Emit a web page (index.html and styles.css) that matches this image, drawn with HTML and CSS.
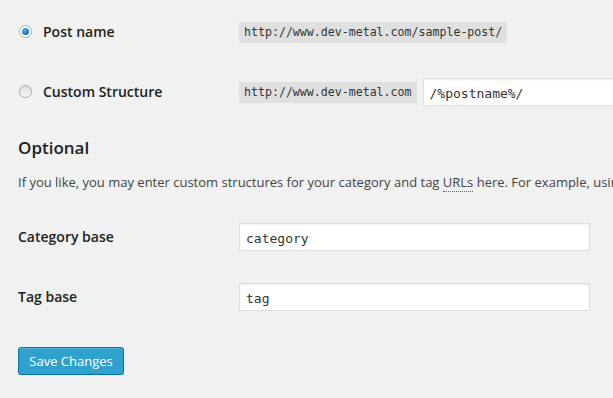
FILE: index.html
```html
<!DOCTYPE html>
<html lang="en">
<head>
  <meta charset="UTF-8">
  <title>Permalink Settings</title>
  <link rel="stylesheet" href="styles.css">
</head>
<body>
  <div class="wrap">
    <div class="form-row">
      <label class="choice">
        <span class="radio checked"></span>
        Post name
      </label>
      <div class="field">
        <code>http://www.dev-metal.com/sample-post/</code>
      </div>
    </div>
    <div class="form-row">
      <label class="choice">
        <span class="radio"></span>
        Custom Structure
      </label>
      <div class="field">
        <code>http://www.dev-metal.com</code>
        <input type="text" class="text-input wide" value="/%postname%/">
      </div>
    </div>

    <h3>Optional</h3>
    <p class="intro">If you like, you may enter custom structures for your category and tag <abbr title="Universal Resource Locator">URLs</abbr> here. For example, using <code>topics</code> as your category base would make your category links like <code>http://www.dev-metal.com/topics/uncategorized/</code>. If you leave these blank the defaults will be used.</p>

    <div class="form-row">
      <label class="label">Category base</label>
      <div class="field">
        <input type="text" class="text-input" value="category">
      </div>
    </div>
    <div class="form-row">
      <label class="label">Tag base</label>
      <div class="field">
        <input type="text" class="text-input" value="tag">
      </div>
    </div>

    <div class="submit">
      <button class="button-primary">Save Changes</button>
    </div>
  </div>
</body>
</html>
```

FILE: styles.css
```css
body {
  margin: 0;
  background: #f1f1f1;
  color: #444;
  font-family: 'Open Sans', Arial, sans-serif;
  font-size: 13px;
  overflow: hidden;
}
.wrap {
  padding: 2px 0 0 18px;
  width: 1200px;
}
.form-row {
  display: grid;
  grid-template-columns: 221px 1fr;
  align-items: center;
  height: 60px;
}
.choice, .label {
  display: flex;
  align-items: center;
  gap: 11px;
  color: #222;
  font-size: 14px;
  font-weight: 600;
}
.choice {
  margin-top: -2px;
}
.label {
  margin-top: -2px;
}
.radio {
  width: 11px;
  height: 11px;
  margin-left: 1px;
  border-radius: 50%;
  border: 1px solid #a9a9a9;
  background: linear-gradient(#dcdcdc, #fafafa);
  position: relative;
}
.radio.checked {
  background: #fff;
}
.radio.checked::after {
  content: '';
  position: absolute;
  left: 2px;
  top: 2px;
  width: 7px;
  height: 7px;
  border-radius: 50%;
  background: radial-gradient(circle at 40% 35%, #4fb6ea 0%, #1a7ab8 60%, #0f4f80 100%);
}
.field {
  display: flex;
  align-items: center;
  gap: 6px;
}
code {
  font-family: 'DejaVu Sans Mono', monospace;
  font-size: 11.6px;
  background: #e0e0e0;
  color: #333;
  padding: 3px 5px 3px 5px;
  line-height: 15px;
}
.text-input {
  box-sizing: border-box;
  width: 351px;
  height: 28px;
  border: 1px solid #ddd;
  box-shadow: inset 0 1px 2px rgba(0, 0, 0, 0.07);
  background: #fff;
  font-family: 'DejaVu Sans Mono', monospace;
  font-size: 13px;
  color: #333;
  padding: 2px 6px 0 6px;
  outline: none;
}
.text-input.wide {
  width: 400px;
}
h3 {
  margin: 14px 0 0 0;
  color: #222;
  font-size: 17px;
  font-weight: 600;
  line-height: 24px;
}
.intro {
  margin: 12px 0 15px 0;
  white-space: nowrap;
  line-height: 20px;
}
.intro code {
  font-size: 11.6px;
}
abbr {
  text-decoration: none;
  border-bottom: 1px dotted #666;
}
.submit {
  padding-top: 20px;
}
.button-primary {
  background: #2ea2cc;
  border: 1px solid #0074a2;
  border-radius: 3px;
  box-shadow: inset 0 1px 0 rgba(120, 200, 230, 0.5), 0 1px 0 rgba(0, 0, 0, 0.15);
  color: #fff;
  font-family: 'Open Sans', Arial, sans-serif;
  font-size: 13px;
  height: 28px;
  padding: 0 10px 1px 10px;
  width: 106px;
  cursor: pointer;
}
```
